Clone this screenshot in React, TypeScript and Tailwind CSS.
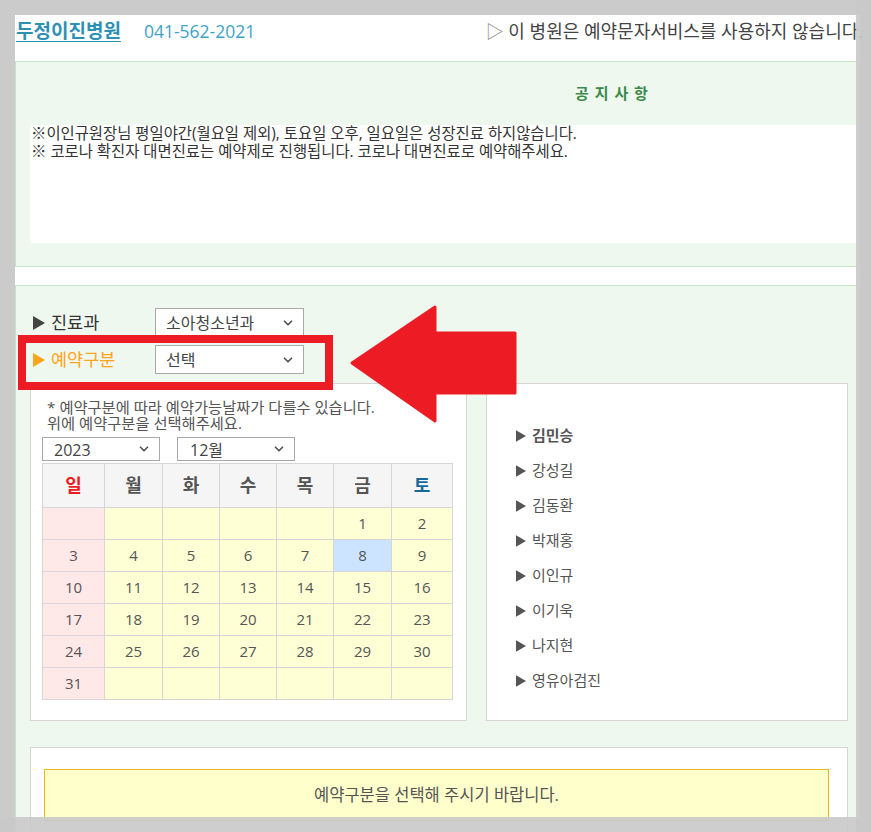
import { ChevronDown } from "lucide-react";

const FONT = { fontFamily: '"Open Sans", "Noto Sans CJK KR", sans-serif' };

const weekDays = [
  { label: "일", color: "text-[#ea1c24]" },
  { label: "월", color: "text-[#555]" },
  { label: "화", color: "text-[#555]" },
  { label: "수", color: "text-[#555]" },
  { label: "목", color: "text-[#555]" },
  { label: "금", color: "text-[#555]" },
  { label: "토", color: "text-[#16699b]" },
];

const doctors = ["김민승", "강성길", "김동환", "박재홍", "이인규", "이기욱", "나지현", "영유아검진"];

// december 2023 starts on friday
const cells: (number | null)[] = [
  ...Array(5).fill(null),
  ...Array.from({ length: 31 }, (_, i) => i + 1),
  ...Array(6).fill(null),
];

function Tri({ className, w = 12, h = 14 }: { className: string; w?: number; h?: number }) {
  return (
    <svg width={w} height={h} viewBox="0 0 12 14" className={className}>
      <polygon points="0,0 12,7 0,14" fill="currentColor" />
    </svg>
  );
}

function Select({
  value,
  options,
  className,
  textClass,
}: {
  value: string;
  options: string[];
  className: string;
  textClass: string;
}) {
  return (
    <div className={`relative border border-[#a9a9a9] bg-white ${className}`}>
      <select
        defaultValue={value}
        className={`w-full h-full appearance-none bg-transparent outline-none text-[#444] ${textClass}`}
        style={FONT}
      >
        {options.map((o) => (
          <option key={o}>{o}</option>
        ))}
      </select>
      <ChevronDown
        size={14}
        strokeWidth={3}
        className="absolute right-[8px] top-1/2 -translate-y-1/2 text-[#555] pointer-events-none"
      />
    </div>
  );
}

export default function App() {
  return (
    <div
      className="relative h-[832px] overflow-hidden bg-[#cbcbcb] pt-[15px] pl-[15px]"
      style={FONT}
    >
      <div className="w-[845px] bg-white">
        {/* header */}
        <div className="h-[32px] flex items-center whitespace-nowrap">
          <span className="pl-[1px] text-[19px] font-bold text-[#2b90b4] underline underline-offset-[3px]">
            두정이진병원
          </span>
          <span className="ml-[23px] text-[17.5px] text-[#3fa3c6]">041-562-2021</span>
          <span className="ml-auto -mr-[3px] text-[18px] text-[#444]">
            <span className="text-[#888]">▷</span> 이 병원은 예약문자서비스를 사용하지 않습니다.
          </span>
        </div>

        {/* notice */}
        <div className="mt-[14px] h-[206px] border border-[#c6e4cd] bg-[#eff8ee]">
          <div className="h-[63px] flex items-center pl-[559px] text-[15px] font-bold tracking-[1px] text-[#3b8a4b]">
            공 지 사 항
          </div>
          <div className="ml-[14px] w-[828px] h-[118px] bg-white pl-[1px] text-[15.4px] leading-[18px] text-[#333]">
            <p>※이인규원장님 평일야간(월요일 제외), 토요일 오후, 일요일은 성장진료 하지않습니다.</p>
            <p>※ 코로나 확진자 대면진료는 예약제로 진행됩니다. 코로나 대면진료로 예약해주세요.</p>
          </div>
        </div>

        {/* reservation */}
        <div className="mt-[18px] border border-[#c6e4cd] bg-[#eff8ee] pt-[22px] pl-[14px] pr-[11px] pb-[40px]">
          <div className="ml-[3px] flex flex-col gap-[8px]">
            <div className="h-[29px] flex items-center">
              <div className="w-[122px] flex items-center gap-[6px] text-[17.5px] text-[#333]">
                <Tri className="text-[#444]" />
                진료과
              </div>
              <Select
                value="소아청소년과"
                options={["소아청소년과"]}
                className="w-[149px] h-[29px]"
                textClass="pl-[10px] text-[16px]"
              />
            </div>
            <div className="h-[29px] flex items-center">
              <div className="w-[122px] flex items-center gap-[6px] text-[17.5px] text-[#ffa31a]">
                <Tri className="text-[#ffa31a]" />
                예약구분
              </div>
              <Select
                value="선택"
                options={["선택"]}
                className="w-[149px] h-[29px]"
                textClass="pl-[10px] text-[16px]"
              />
            </div>
          </div>

          <div className="mt-[9px] flex gap-[19px]">
            {/* calendar */}
            <div className="w-[437px] h-[338px] border border-[#d6d6d6] bg-white pl-[11px] pt-[15px]">
              <div className="pl-[5px] text-[15.3px] leading-[16px] text-[#555]">
                <p>* 예약구분에 따라 예약가능날짜가 다를수 있습니다.</p>
                <p>위에 예약구분을 선택해주세요.</p>
              </div>
              <div className="mt-[6px] flex gap-[17px]">
                <Select
                  value="2023"
                  options={["2023"]}
                  className="w-[118px] h-[24px]"
                  textClass="pl-[11px] text-[16px]"
                />
                <Select
                  value="12월"
                  options={["12월"]}
                  className="w-[118px] h-[24px]"
                  textClass="pl-[12px] text-[16px]"
                />
              </div>
              <div className="mt-[2px] w-[411px] grid grid-cols-[62px_58px_57px_57px_57px_58px_61px] border-l border-t border-[#d6d6d6]">
                {weekDays.map((d) => (
                  <div
                    key={d.label}
                    className={`h-[44px] flex items-center justify-center border-r border-b border-[#d6d6d6] bg-[#f5f5f5] text-[18px] font-bold ${d.color}`}
                  >
                    {d.label}
                  </div>
                ))}
                {cells.map((n, i) => (
                  <div
                    key={i}
                    className={`h-[32px] flex items-center justify-center border-r border-b border-[#d6d6d6] text-[15px] text-[#555] ${
                      i % 7 === 0 ? "bg-[#ffe8e8]" : n === 8 ? "bg-[#cce4ff]" : "bg-[#ffffd6]"
                    }`}
                  >
                    {n ?? ""}
                  </div>
                ))}
              </div>
            </div>

            {/* doctors */}
            <div className="w-[362px] h-[338px] border border-[#d6d6d6] bg-white pl-[29px] pt-[34px]">
              {doctors.map((name, i) => (
                <div
                  key={name}
                  className={`h-[35px] flex items-center gap-[6px] text-[15px] text-[#555] ${
                    i === 0 ? "font-bold" : ""
                  }`}
                >
                  <Tri className="text-[#555]" w={10} h={12} />
                  {name}
                </div>
              ))}
            </div>
          </div>

          <div className="mt-[26px] w-[818px] border border-[#d6d6d6] bg-white pt-[21px] pl-[13px] pb-[20px]">
            <div className="w-[785px] h-[52px] flex items-center justify-center border border-[#e8b923] bg-[#ffffcc] text-[16.5px] text-[#555]">
              예약구분을 선택해 주시기 바랍니다.
            </div>
          </div>
        </div>
      </div>

      {/* annotation */}
      <div className="absolute left-[18px] top-[335px] w-[315px] h-[55px] border-[8px] border-[#ed1c24]" />
      <svg className="absolute left-[350px] top-[305px]" width="168" height="118" viewBox="0 0 168 118">
        <polygon
          points="2,58 85,2 85,28 165,28 165,88 85,88 85,116"
          fill="#ed1c24"
          stroke="#ed1c24"
          strokeWidth="3"
          strokeLinejoin="round"
        />
      </svg>

      {/* frame */}
      <div className="absolute top-0 right-0 w-[15px] h-full bg-[#c9c9c9]/90" />
      <div className="absolute left-0 bottom-0 w-full h-[15px] bg-[#c9c9c9]/90" />
    </div>
  );
}
